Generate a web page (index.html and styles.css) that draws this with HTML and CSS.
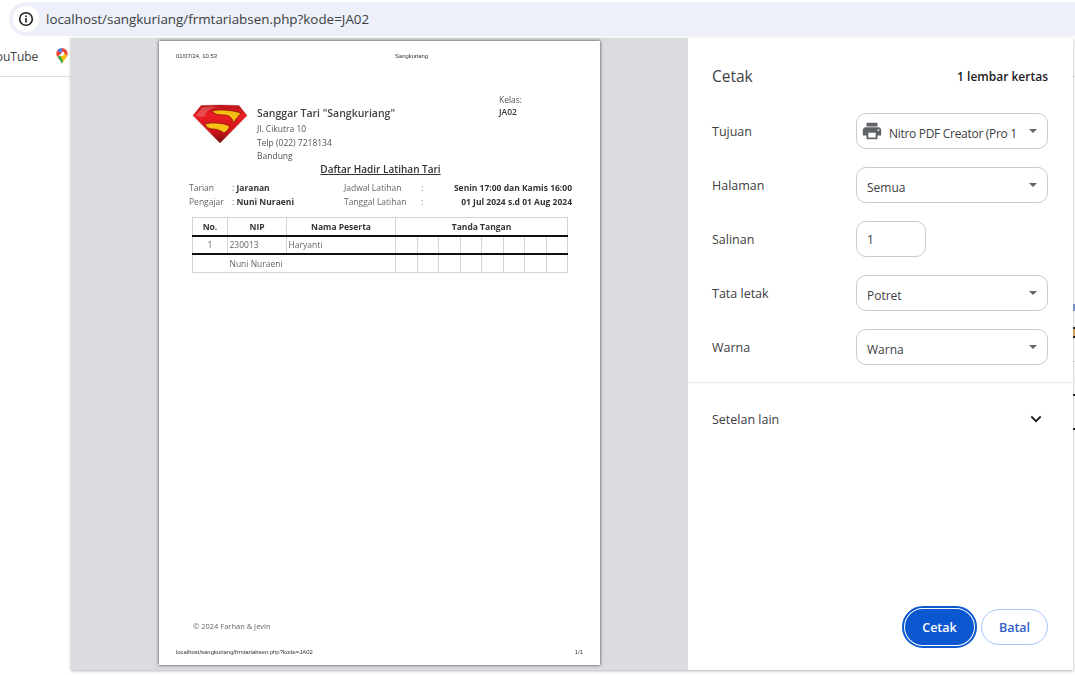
FILE: index.html
```html
<!DOCTYPE html>
<html lang="id">
<head>
<meta charset="utf-8">
<title>Cetak</title>
<link rel="stylesheet" href="styles.css">
</head>
<body>
<header class="omnibox">
  <span class="site-info">
    <svg width="16" height="16" viewBox="0 0 16 16"><circle cx="8" cy="8" r="6.3" fill="none" stroke="#1f1f1f" stroke-width="1.6"/><rect x="7.2" y="7" width="1.6" height="4.6" fill="#1f1f1f"/><rect x="7.2" y="4.5" width="1.6" height="1.6" fill="#1f1f1f"/></svg>
  </span>
  <span class="url">localhost/sangkuriang/frmtariabsen.php?kode=JA02</span>
</header>
<nav class="bookmarks">
  <span class="bm-text">YouTube</span>
  <svg class="pin" width="12" height="16" viewBox="0 0 14 18">
    <path d="M7 0C3 0 .4 2.900.4 6.400c0 1.500.5 2.800 1.300 3.900L7 5z" fill="#ea4335"/>
    <path d="M7 0c-2 0-3.800.8-5 2.200L5 5.500A2.800 2.800 0 0 1 7 3.700z" fill="#4285f4"/>
    <path d="M7 0c3.900 0 6.600 2.900 6.600 6.400 0 1-.3 2-.7 2.800L9.500 5.200A2.800 2.800 0 0 0 7 3.700z" fill="#ea4335"/>
    <path d="M12.900 9.200 9.500 5.600A2.800 2.800 0 0 1 5 8.400l-2.700 3.200c1.600 2 3.800 3.900 4.700 6.400 1-3.400 4.400-5.600 5.900-8.800z" fill="#fbbc04"/>
    <path d="M5 8.400 1.700 10.300c.6 1 1.800 2.300 2.700 3.300 1 1.200 2 2.600 2.600 4.400.3-1 .8-1.900 1.400-2.700z" fill="#34a853"/>
  </svg>
</nav>
<div class="peek">
  <i class="peek-blue"></i>
  <i class="peek-icon"></i>
  <i class="peek-line"></i>
  <i class="peek-dash one"></i>
  <i class="peek-dash two"></i>
</div>
<main class="dialog">
  <section class="preview">
    <article class="paper">
      <div class="print-head"><span>01/07/24, 10.53</span><span class="print-title">Sangkuriang</span><span></span></div>
      <div class="letterhead">
        <svg class="logo" width="56" height="40" viewBox="0 0 56 40">
          <defs>
            <linearGradient id="red" x1="0" y1="0" x2="0" y2="1"><stop offset="0" stop-color="#b81216"/><stop offset=".25" stop-color="#ea1f23"/><stop offset=".7" stop-color="#d01518"/><stop offset="1" stop-color="#6e0f0f"/></linearGradient>
          </defs>
          <path d="M9 1.500Q28 .5 47 1.500L55 11.500 28 39 1 11.500Z" fill="url(#red)" stroke="#a03030" stroke-width=".4"/>
          <path d="M4 11.500 10 3.500Q20 2 26 3 14 5 13 12Q8 14 4 11.500Z" fill="#f0787a" opacity=".5"/>
          <path d="M20 7C28 5 40 6 49 9L41 19C41 15 38 11 32 11 26 11 22 10 20 7Z" fill="#f6bb10" stroke="#8a1510" stroke-width=".8"/>
          <path d="M13 20C20 18 33 19 37 22 38 24 35 27 32 29 28 26 24 25 21 25 17 25 14 23 13 20Z" fill="#f8c414" stroke="#8a1510" stroke-width=".8"/>
        </svg>
        <div class="org">
          <h2>Sanggar Tari "Sangkuriang"</h2>
          <p>Jl. Cikutra 10</p>
          <p>Telp (022) 7218134</p>
          <p>Bandung</p>
        </div>
        <div class="kelas"><p>Kelas:</p><p class="strong">JA02</p></div>
      </div>
      <h1 class="doc-title">Daftar Hadir Latihan Tari</h1>
      <div class="meta">
        <span>Tarian</span><span>: <b>Jaranan</b></span><span>Jadwal Latihan</span><span class="meta-val"><span>:</span><b>Senin 17:00 dan Kamis 16:00</b></span>
        <span>Pengajar</span><span>: <b>Nuni Nuraeni</b></span><span>Tanggal Latihan</span><span class="meta-val"><span>:</span><b>01 Jul 2024 s.d 01 Aug 2024</b></span>
      </div>
      <table class="attendance">
        <colgroup><col class="c-no"><col class="c-nip"><col class="c-name"><col class="c-s"><col class="c-s"><col class="c-s"><col class="c-s"><col class="c-s"><col class="c-s"><col class="c-s"><col class="c-s"></colgroup>
        <thead><tr><th>No.</th><th>NIP</th><th>Nama Peserta</th><th colspan="8">Tanda Tangan</th></tr></thead>
        <tbody>
          <tr class="thick"><td class="center">1</td><td>230013</td><td>Haryanti</td><td></td><td></td><td></td><td></td><td></td><td></td><td></td><td></td></tr>
          <tr class="last"><td class="teacher" colspan="3">Nuni Nuraeni</td><td></td><td></td><td></td><td></td><td></td><td></td><td></td><td></td></tr>
        </tbody>
      </table>
      <p class="copyright">© 2024 Farhan &amp; Jevin</p>
      <div class="print-foot"><span>localhost/sangkuriang/frmtariabsen.php?kode=JA02</span><span>1/1</span></div>
    </article>
  </section>
  <aside class="sidebar">
    <div class="side-head"><h2>Cetak</h2><span class="sheets">1 lembar kertas</span></div>
    <div class="settings">
      <div class="row"><label>Tujuan</label>
        <div class="field">
          <svg class="printer" width="22" height="22" viewBox="0 0 24 24"><path fill="#5f6368" d="M19 8H5c-1.660 0-3 1.340-3 3v6h4v4h12v-4h4v-6c0-1.660-1.340-3-3-3zm-3 11H8v-5h8v5zm3-7c-.55 0-1-.45-1-1s.45-1 1-1 1 .45 1 1-.45 1-1 1zm-1-9H6v4h12V3z"/></svg>
          <span class="val dest">Nitro PDF Creator (Pro 1</span><i class="caret"></i>
        </div>
      </div>
      <div class="row"><label>Halaman</label><div class="field"><span class="val">Semua</span><i class="caret"></i></div></div>
      <div class="row"><label>Salinan</label><div class="field short"><span class="val">1</span></div></div>
      <div class="row"><label>Tata letak</label><div class="field"><span class="val">Potret</span><i class="caret"></i></div></div>
      <div class="row"><label>Warna</label><div class="field"><span class="val">Warna</span><i class="caret"></i></div></div>
    </div>
    <div class="more">
      <span>Setelan lain</span>
      <svg width="12" height="8" viewBox="0 0 12 8"><path d="M1.300 1.500 6 6.200 10.700 1.500" fill="none" stroke="#202124" stroke-width="1.800"/></svg>
    </div>
    <div class="actions">
      <button class="btn primary" type="button">Cetak</button>
      <button class="btn ghost" type="button">Batal</button>
    </div>
  </aside>
</main>
</body>
</html>
```
FILE: styles.css
```css
* { box-sizing: border-box; }
html, body { margin: 0; height: 675px; overflow: hidden; background: #fff; }
body { font-family: "Open Sans", "Noto Sans", sans-serif; color: #202124; position: relative; }
p, h1, h2 { margin: 0; font-weight: 400; }

.omnibox {
  display: flex; align-items: center; height: 34px;
  margin: 2px 0 0 9px; padding-left: 4px;
  background: #edf0f9; border-radius: 17px 0 0 17px;
}
.site-info {
  width: 26px; height: 26px; border-radius: 50%; background: #fff;
  display: flex; align-items: center; justify-content: center;
}
.url { margin-left: 7px; font-size: 13.400px; color: #3c4043; white-space: nowrap; }

.bookmarks {
  display: flex; align-items: center; height: 41px; overflow: hidden;
  border-bottom: 1px solid #e0e0e0;
}
.bm-text { margin-left: -11px; font-size: 12px; color: #3c4043; }
.pin { margin-left: 18px; }

.peek i { position: absolute; display: block; }
.peek-blue { left: 1073px; top: 304px; width: 2px; height: 7px; background: #7f9fd8; }
.peek-icon { left: 1073px; top: 327px; width: 2px; height: 11px; background: #e8b060; border-top: 2px solid #222; border-bottom: 2px solid #222; }
.peek-line { left: 1073px; top: 361px; width: 2px; height: 1px; background: #ddd; }
.peek-dash { left: 1073px; width: 2px; height: 2px; background: #222; }
.peek-dash.one { top: 394px; }
.peek-dash.two { top: 428px; }

.dialog {
  position: absolute; left: 71px; top: 38px; width: 1002px; height: 632px;
  display: flex; background: #fff;
  box-shadow: 0 1px 3px rgba(60, 64, 67, .4);
}
.preview { width: 617px; background: #dadce0; padding: 3px 0 0 88px; }

.paper {
  width: 441px; height: 624px; background: #fff; color: #333;
  box-shadow: 0 0 3px rgba(0, 0, 0, .75);
  display: flex; flex-direction: column;
  padding: 10px 28px 0 17px;
  filter: blur(.35px);
}
.print-head {
  display: grid; grid-template-columns: 219px auto 1fr; height: 11px;
  font: 5.900px/11px "Liberation Sans", sans-serif; color: #333;
}
.letterhead { display: flex; margin: 42px 0 0 16px; height: 62px; font-size: 8.500px; }
.logo { margin-top: 0; flex: none; }
.org { margin-left: 9px; }
.org h2 { font-size: 10.500px; line-height: 18px; font-weight: 600; color: #444; }
.org p { line-height: 13.500px; color: #555; }
.kelas { margin-left: 104px; margin-top: -10px; color: #555; }
.kelas p { line-height: 12px; }
.kelas .strong { font-weight: 600; color: #333; }

.doc-title {
  font-size: 10px; line-height: 14px; font-weight: 600; color: #333;
  text-align: center; text-decoration: underline; margin: -4px 0 0 13px;
}
.meta {
  display: grid; grid-template-columns: 43px 112px 77px 1fr;
  margin: 5px 0 0 13px; font-size: 8.500px; line-height: 14px; color: #666;
}
.meta b { color: #333; font-weight: 700; }
.meta-val { display: flex; justify-content: space-between; }

.attendance {
  table-layout: fixed; border-collapse: collapse; width: 375.500px;
  margin: 8px 0 0 16px; font-size: 8.500px; color: #666;
}
.c-no { width: 35px; }
.c-nip { width: 59px; }
.c-name { width: 109px; }
.c-s { width: 21.500px; }
.attendance th, .attendance td { border: 1px solid #d4d4d4; padding: 0 1.500px; }
.attendance th { height: 18px; font-weight: 700; color: #333; text-align: center; border-bottom: 2px solid #111; }
.attendance td { height: 18px; }
.attendance .thick td { border-bottom: 2px solid #111; }
.attendance .last td { height: 19px; }
.attendance .center { text-align: center; }
.attendance .teacher { padding-left: 36.500px; }
.copyright { margin: auto 0 0 17px; font-size: 7.500px; line-height: 12px; color: #666; }
.print-foot {
  display: flex; justify-content: space-between; height: 11px; margin: 15px -11px 7px 0;
  font: 5.950px/11px "Liberation Sans", sans-serif; color: #333;
}

.sidebar { flex: 1; display: flex; flex-direction: column; font-size: 12.500px; }
.side-head { display: flex; justify-content: space-between; align-items: center; height: 26px; margin: 25px 25px 0 24px; }
.side-head h2 { font-size: 15.500px; color: #3c4043; }
.sheets { font-weight: 600; font-size: 12px; color: #202124; }
.settings { display: flex; flex-direction: column; gap: 18px; margin: 24px 25px 0 24px; }
.row { display: flex; align-items: center; height: 36px; }
.row label { width: 144px; color: #3c4043; margin-top: 1px; }
.field {
  position: relative; width: 192px; height: 36px; padding: 4px 10px 0;
  border: 1px solid #c9cacc; border-radius: 10px; display: flex; align-items: center;
  font-size: 12px; color: #3c4043;
}
.field.short { width: 70px; padding-top: 0; }
.printer { position: absolute; left: 4px; top: 6px; }
.dest { margin-left: 22px; letter-spacing: -.3px; }
.caret {
  position: absolute; right: 10px; top: 15px; width: 0; height: 0;
  border: 4px solid transparent; border-top: 4.500px solid #5f6368; border-bottom: 0;
}
.more {
  display: flex; align-items: center; justify-content: space-between;
  margin-top: 17px; border-top: 1px solid #e8eaed; height: 73px; padding: 0 31px 0 24px; color: #3c4043;
}
.actions { margin-top: auto; display: flex; justify-content: flex-end; gap: 7px; padding: 0 25px 25px 0; }
.btn { height: 36px; border-radius: 18px; font: 600 12.500px "Open Sans", sans-serif; padding: 0; }
.primary {
  width: 69px; background: #0b57d0; color: #fff; border: 0;
  outline: 2px solid #0b57d0; outline-offset: 1px;
}
.ghost { width: 67px; background: #fff; color: #2f5fc4; border: 1px solid #a8c7fa; }
```
